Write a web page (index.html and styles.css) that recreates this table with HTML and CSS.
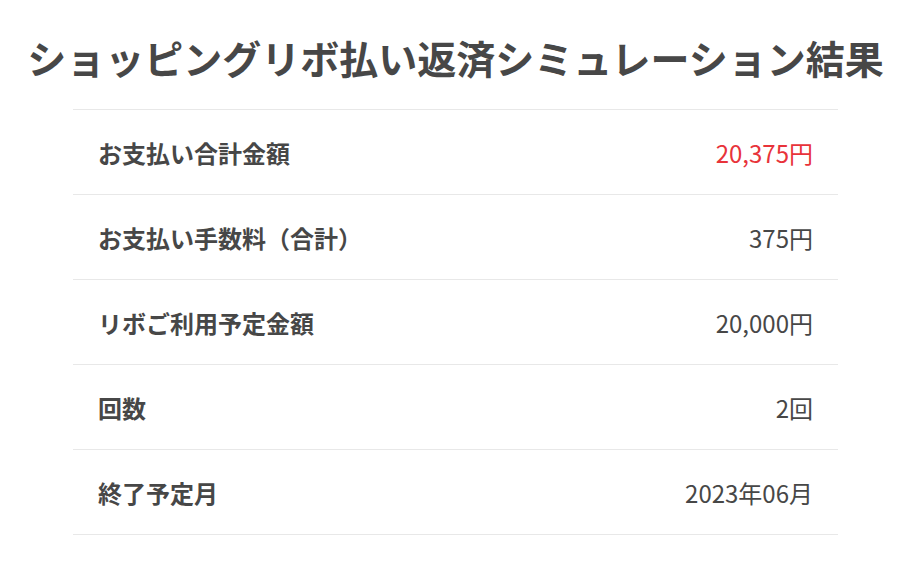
FILE: index.html
```html
<!DOCTYPE html>
<html lang="ja">
<head>
<meta charset="utf-8">
<link rel="stylesheet" href="styles.css">
</head>
<body>
<div class="page">
  <h1 class="title">ショッピングリボ払い返済シミュレーション結果</h1>
  <div class="result">
    <div class="row"><div class="label">お支払い合計金額</div><div class="value red">20,375円</div></div>
    <div class="row"><div class="label">お支払い手数料（合計）</div><div class="value">375円</div></div>
    <div class="row"><div class="label">リボご利用予定金額</div><div class="value">20,000円</div></div>
    <div class="row"><div class="label">回数</div><div class="value">2回</div></div>
    <div class="row"><div class="label">終了予定月</div><div class="value">2023年06月</div></div>
  </div>
</div>
</body>
</html>
```

FILE: styles.css
```css
html, body {
  margin: 0;
  padding: 0;
  background: #ffffff;
}
body {
  font-family: "Noto Sans CJK JP", "Noto Sans", sans-serif;
  color: #474747;
}
.page {
  width: 911px;
  padding-top: 32px;
  display: flex;
  flex-direction: column;
  align-items: center;
}
.title {
  margin: 0 0 27px;
  font-size: 39px;
  line-height: 50px;
  font-weight: 700;
  color: #474747;
  white-space: nowrap;
}
.result {
  width: 765px;
  border-top: 1px solid #e8e8e8;
}
.row {
  height: 84px;
  border-bottom: 1px solid #e8e8e8;
  display: flex;
  align-items: center;
  justify-content: space-between;
  padding: 0 25px;
  box-sizing: content-box;
}
.label {
  font-size: 24px;
  font-weight: 700;
}
.value {
  font-size: 24px;
  font-weight: 400;
}
.red {
  color: #e8333a;
}
```
